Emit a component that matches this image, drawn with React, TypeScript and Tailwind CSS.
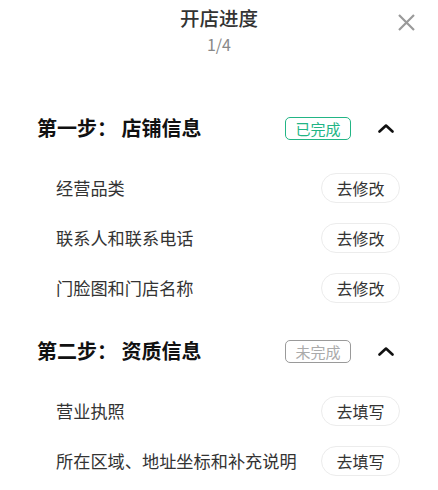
const FONT = { fontFamily: '"Noto Sans CJK SC", "Noto Sans", sans-serif' };

interface Item {
  label: string;
  action: string;
}

interface Step {
  title: string;
  done: boolean;
  items: Item[];
}

const STEPS: Step[] = [
  {
    title: "第一步： 店铺信息",
    done: true,
    items: [
      { label: "经营品类", action: "去修改" },
      { label: "联系人和联系电话", action: "去修改" },
      { label: "门脸图和门店名称", action: "去修改" },
    ],
  },
  {
    title: "第二步： 资质信息",
    done: false,
    items: [
      { label: "营业执照", action: "去填写" },
      { label: "所在区域、地址坐标和补充说明", action: "去填写" },
    ],
  },
];

function Chevron() {
  return (
    <svg width="16" height="9" viewBox="0 0 16 9" fill="none">
      <polyline
        points="1.5,7.5 8,1.5 14.5,7.5"
        stroke="#111"
        strokeWidth="2.6"
        strokeLinecap="round"
        strokeLinejoin="round"
      />
    </svg>
  );
}

export default function App() {
  return (
    <div className="w-[438px] h-[490px] bg-white overflow-hidden relative" style={FONT}>
      <button className="absolute top-[12px] right-[22px] w-[19px] h-[20px] flex items-center justify-center">
        <svg width="19" height="19" viewBox="0 0 19 19" fill="none">
          <path d="M2 2 L17 17 M17 2 L2 17" stroke="#9a9a9a" strokeWidth="2.2" />
        </svg>
      </button>

      <div className="pt-[5px] flex flex-col items-center">
        <h1 className="text-[19.5px] leading-[26px] font-medium text-[#333]">开店进度</h1>
        <p className="mt-[3px] text-[16px] leading-[20px] text-[#888]">1/4</p>
      </div>

      <div className="mt-[59px]">
        {STEPS.map((step, i) => (
          <section key={step.title} className={i > 0 ? "mt-[23px]" : ""}>
            <div className="h-[30px] pl-[37px] pr-[44px] flex items-center">
              <h2 className="flex-1 text-[20px] leading-[30px] font-bold text-[#111] whitespace-pre">
                {step.title}
              </h2>
              {step.done ? (
                <span className="w-[66px] h-[23px] flex items-center justify-center rounded-[5px] border border-[#22b585] text-[15px] leading-none text-[#22b585]">
                  已完成
                </span>
              ) : (
                <span className="w-[66px] h-[23px] flex items-center justify-center rounded-[5px] border border-[#9a9a9a] text-[15px] leading-none text-[#aaa]">
                  未完成
                </span>
              )}
              <span className="ml-[27px] w-[16px] flex items-center">
                <Chevron />
              </span>
            </div>
            <ul className="mt-[20px]">
              {step.items.map((item) => (
                <li
                  key={item.label}
                  className="h-[50px] pl-[56px] pr-[38px] flex items-center justify-between"
                >
                  <span className="text-[17.2px] text-[#333]">{item.label}</span>
                  <button className="w-[79px] h-[30px] rounded-full border border-[#ececec] text-[16px] leading-none text-[#333] flex items-center justify-center">
                    {item.action}
                  </button>
                </li>
              ))}
            </ul>
          </section>
        ))}
      </div>
    </div>
  );
}
